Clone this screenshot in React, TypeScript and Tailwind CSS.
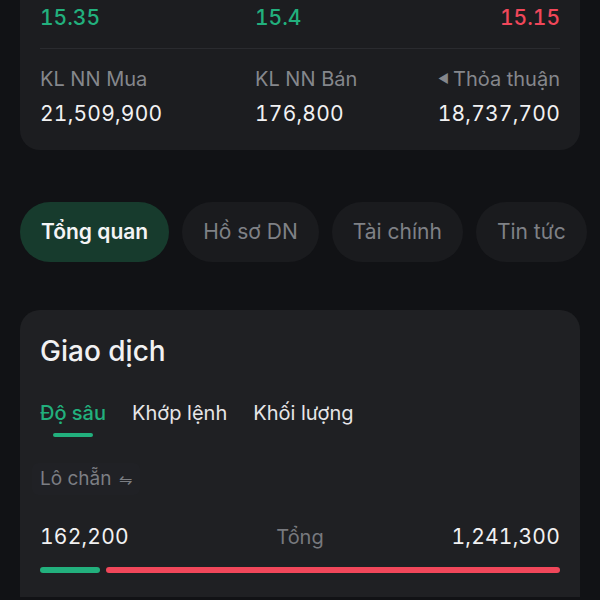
import { useState } from 'react';

const TOP_PRICES = [
  { value: '15.35', color: 'text-[#22b07d]' },
  { value: '15.4', color: 'text-[#22b07d]' },
  { value: '15.15', color: 'text-[#f0475a]' },
];

const TABS = ['Tổng quan', 'Hồ sơ DN', 'Tài chính', 'Tin tức'];
const SUB_TABS = ['Độ sâu', 'Khớp lệnh', 'Khối lượng'];

export default function App() {
  const [tab, setTab] = useState(0);
  const [sub, setSub] = useState(0);
  const buy = 162200;
  const sell = 1241300;
  const buyPct = (buy / (buy + sell)) * 100;

  return (
    <div
      className="min-h-[600px] w-[600px] overflow-hidden bg-[#111215] text-[#f1f1f2]"
      style={{ fontFamily: 'Inter, "Noto Sans", sans-serif' }}
    >
      {/* price summary card */}
      <div className="mx-5 rounded-b-[20px] bg-[#1c1d20] px-5 pt-[4px] pb-[22px]">
        <div className="grid grid-cols-[215px_1fr_auto] text-[21px] leading-[28px] font-medium tabular-nums">
          {TOP_PRICES.map((p) => (
            <span key={p.value} className={p.color}>
              {p.value}
            </span>
          ))}
        </div>
        <div className="mt-4 h-px bg-[#2a2b2f]" />
        <div className="mt-4 grid grid-cols-[215px_1fr_auto] text-[20px] leading-[28px]">
          <span className="text-[#85878c]">KL NN Mua</span>
          <span className="text-[#85878c]">KL NN Bán</span>
          <span className="flex items-center gap-1 text-[#85878c]">
            <span className="text-[12px]">◀</span>Thỏa thuận
          </span>
        </div>
        <div className="mt-[7px] grid grid-cols-[215px_1fr_auto] text-[21px] leading-[28px] tabular-nums tracking-[0.01em]">
          <span>21,509,900</span>
          <span>176,800</span>
          <span>18,737,700</span>
        </div>
      </div>

      {/* section tabs */}
      <div className="mt-[52px] flex gap-[13px] overflow-hidden px-5">
        {TABS.map((t, i) => (
          <button
            key={t}
            onClick={() => setTab(i)}
            className={
              i === tab
                ? 'h-[60px] shrink-0 rounded-full bg-[#173b2d] px-[21px] text-[21px] font-semibold text-[#f4f4f5]'
                : 'h-[60px] shrink-0 rounded-full bg-[#1a1b1e] px-[21px] text-[21px] text-[#7f8186]'
            }
          >
            {t}
          </button>
        ))}
      </div>

      {/* trading card */}
      <div className="mx-5 mt-12 rounded-t-[20px] bg-[#1f2023] px-5 pt-6 pb-6">
        <h2 className="text-[28px] leading-[34px] font-medium">Giao dịch</h2>
        <div className="mt-[31px] flex gap-[26px] text-[20px] leading-[28px]">
          {SUB_TABS.map((s, i) => (
            <button key={s} onClick={() => setSub(i)} className="flex flex-col items-center">
              <span className={i === sub ? 'text-[#22b07d] font-medium' : 'text-[#e6e6e8]'}>{s}</span>
              <span
                className={
                  i === sub ? 'mt-[6px] h-[4px] w-10 rounded-full bg-[#22b07d]' : 'mt-[6px] h-[4px] w-10'
                }
              />
            </button>
          ))}
        </div>

        <div className="mt-[26px] -ml-2 inline-flex h-8 items-center gap-2 rounded-md bg-[#202125] px-2 text-[19px] text-[#7c7e83]">
          Lô chẵn <span className="text-[16px]">⇋</span>
        </div>

        <div className="mt-7 grid grid-cols-3 items-center text-[21px] leading-[28px]">
          <span className="tabular-nums tracking-[0.01em]">162,200</span>
          <span className="text-center text-[20px] text-[#77797e]">Tổng</span>
          <span className="text-right tabular-nums tracking-[0.01em]">1,241,300</span>
        </div>

        <div className="mt-4 flex gap-[6px]">
          <div className="h-[6px] rounded-full bg-[#22b07d]" style={{ width: `${buyPct}%` }} />
          <div className="h-[6px] flex-1 rounded-full bg-[#f0475a]" />
        </div>
      </div>
    </div>
  );
}
